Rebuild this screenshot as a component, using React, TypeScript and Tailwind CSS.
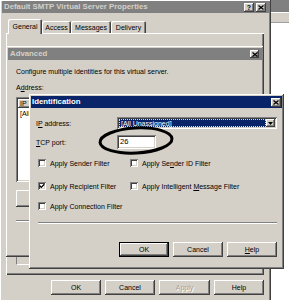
import React from "react";

const raised =
  "bg-[#d4d0c8] shadow-[inset_-1px_-1px_#404040,inset_1px_1px_#ffffff,inset_-2px_-2px_#808080,inset_2px_2px_#d4d0c8]";
const sunken =
  "bg-white shadow-[inset_1px_1px_#808080,inset_-1px_-1px_#ffffff,inset_2px_2px_#404040,inset_-2px_-2px_#d4d0c8]";

function CloseGlyph() {
  return (
    <svg width="6" height="5" viewBox="0 0 6 5">
      <path d="M0.5 0.5 L5.5 4.5 M5.5 0.5 L0.5 4.5" stroke="#000" strokeWidth="1.3" />
    </svg>
  );
}

function TitleBtn({ children, w = "w-[10px]", h = "h-[9px]" }: { children: React.ReactNode; w?: string; h?: string }) {
  return (
    <div className={`${raised} ${w} ${h} flex items-center justify-center shrink-0`}>{children}</div>
  );
}

function Btn({ label, w = "w-[50px]", disabled = false, def = false, u }: { label: string; w?: string; disabled?: boolean; def?: boolean; u?: boolean }) {
  const inner = (
    <div className={`${raised} h-full w-full flex items-center justify-center`}>
      <span
        className={`text-[7px] leading-none ${disabled ? "text-[#a0a0a0] [text-shadow:1px_1px_0_#ffffff]" : "text-black"}`}
      >
        {u ? (
          <>
            <span className="underline">{label[0]}</span>
            {label.slice(1)}
          </>
        ) : (
          label
        )}
      </span>
    </div>
  );
  if (def) {
    return <div className={`${w} h-[15px] border border-black`}>{inner}</div>;
  }
  return <div className={`${w} h-[15px]`}>{inner}</div>;
}

function Check({ checked = false }: { checked?: boolean }) {
  return (
    <div className={`${sunken} w-[8px] h-[8px] shrink-0 flex items-center justify-center`}>
      {checked && (
        <svg width="6" height="6" viewBox="0 0 6 6">
          <path d="M0.8 2.8 L2.3 4.4 L5.3 1.2" stroke="#000" strokeWidth="1.3" fill="none" />
        </svg>
      )}
    </div>
  );
}

function CheckRow({ label, checked }: { label: React.ReactNode; checked?: boolean }) {
  return (
    <div className="flex items-center gap-[4px] w-[92px]">
      <Check checked={checked} />
      <span className="text-[7px] leading-none whitespace-nowrap">{label}</span>
    </div>
  );
}

function Tab({ label, w, selected = false }: { label: string; w: string; selected?: boolean }) {
  return (
    <div
      className={`${w} ${selected ? "h-[15px] -mb-[1px] z-10" : "h-[12px]"} bg-[#d4d0c8] rounded-t-[2px] shadow-[inset_1px_1px_#ffffff,inset_-1px_0_#404040,inset_-2px_0_#808080] flex items-center justify-center relative`}
    >
      <span className="text-[7px] leading-none">{label}</span>
    </div>
  );
}

export default function App() {
  return (
    <div className="relative w-[289px] h-[300px] overflow-hidden bg-white font-['Liberation_Sans',Arial,sans-serif] text-black">
      {/* background window on the right */}
      <div className="absolute left-[266px] top-0 w-[23px] h-[300px] bg-white flex flex-col">
        <div className="h-[12px] bg-[#808080]" />
        <div className="h-[1px] bg-white" />
        <div className="h-[9px] bg-[#d4d0c8]" />
        <div className="h-[1px] bg-[#a0a0a0]" />
      </div>

      {/* main properties window */}
      <div className={`absolute left-0 top-0 w-[271px] h-[304px] ${raised} flex flex-col`}>
        <div className="mx-[2px] mt-[1px] h-[12px] bg-[#808080] flex items-center justify-between pl-[2px] pr-[3px]">
          <span className="text-[#d4d0c8] font-bold text-[7.8px] leading-none whitespace-nowrap">
            Default SMTP Virtual Server Properties
          </span>
          <div className="flex gap-[2px]">
            <TitleBtn>
              <span className="font-bold text-[7px] leading-none">?</span>
            </TitleBtn>
            <TitleBtn>
              <CloseGlyph />
            </TitleBtn>
          </div>
        </div>

        <div className="mt-[6px] h-[14px] pl-[8px] flex items-end">
          <Tab label="General" w="w-[34px]" selected />
          <Tab label="Access" w="w-[29px]" />
          <Tab label="Messages" w="w-[40px]" />
          <Tab label="Delivery" w="w-[35px]" />
        </div>

        <div className="mx-[6px] w-[258px] h-[242px] bg-[#d4d0c8] shadow-[inset_1px_1px_#ffffff,inset_-1px_-1px_#404040,inset_-2px_-2px_#808080] flex flex-col">
          <div className="mt-[224px] ml-[10px] w-[80px] h-[8px] border-l border-b border-l-[#808080] border-b-white" />
        </div>

        <div className="mt-[5px] flex justify-end gap-[4px] pr-[7px]">
          <Btn label="OK" />
          <Btn label="Cancel" />
          <Btn label="Apply" w="w-[51px]" disabled />
          <Btn label="Help" />
        </div>
      </div>

      {/* Advanced dialog */}
      <div className={`absolute left-[6px] top-[46px] w-[258px] h-[211px] ${raised} flex flex-col`}>
        <div className="mx-[2px] mt-[2px] h-[12px] bg-[#808080] flex items-center justify-between pl-[2px] pr-[3px]">
          <span className="text-[#d4d0c8] font-bold text-[7.8px] leading-none">Advanced</span>
          <TitleBtn w="w-[9px]" h="h-[8px]">
            <CloseGlyph />
          </TitleBtn>
        </div>
        <div className="pl-[10px] flex flex-col">
          <span className="mt-[8px] text-[7px] leading-[8px] whitespace-nowrap">
            Configure multiple identities for this virtual server.
          </span>
          <span className="mt-[8px] text-[7px] leading-[8px]">
            A<span className="underline">d</span>dress:
          </span>
          <div className={`mt-[5px] w-[200px] h-[85px] ${sunken} p-[2px] flex flex-col`}>
            <div className={`${raised} h-[9px] w-[60px] flex items-center pl-[2px]`}>
              <span className="text-[7px] leading-none">IP</span>
            </div>
            <span className="mt-[2px] pl-[2px] text-[7px] leading-none">[All Unassigned]</span>
          </div>
          <div className={`mt-[8px] w-[60px] h-[17px] ${raised}`} />
          <div className="mt-[13px] w-[100px] h-[2px] border-t border-b border-t-[#808080] border-b-white" />
        </div>
      </div>

      {/* Identification dialog */}
      <div className={`absolute left-[29px] top-[94px] w-[255px] h-[175px] ${raised} flex flex-col`}>
        <div className="mx-[2px] mt-[2px] h-[12px] bg-[#0a246a] flex items-center justify-between pl-[1px] pr-[1px]">
          <span className="text-white font-bold text-[7.8px] leading-none">Identification</span>
          <TitleBtn>
            <CloseGlyph />
          </TitleBtn>
        </div>

        <div className="pl-[7px] flex flex-col">
          <div className="mt-[9px] h-[12px] flex items-center">
            <span className="w-[81px] text-[7px] leading-none">
              I<span className="underline">P</span> address:
            </span>
            <div className={`w-[160px] h-[12px] ${sunken} p-[2px] flex items-stretch`}>
              <div className="flex-1 bg-[#0a246a] border border-dotted border-[#e8e0a0] flex items-center pl-[1px]">
                <span className="text-white text-[7px] leading-none">[All Unassigned]</span>
              </div>
              <div className={`${raised} w-[9px] flex items-center justify-center`}>
                <svg width="5" height="3" viewBox="0 0 5 3">
                  <path d="M0 0 L5 0 L2.5 3 Z" fill="#000" />
                </svg>
              </div>
            </div>
          </div>

          <div className="mt-[6px] h-[14px] flex items-center">
            <span className="w-[81px] text-[7px] leading-none">
              <span className="underline">T</span>CP port:
            </span>
            <div className={`w-[39px] h-[14px] ${sunken} flex items-center pl-[3px]`}>
              <span className="text-[7.5px] leading-none">26</span>
            </div>
          </div>

          <div className="mt-[9px] h-[10px] pl-[2px] flex items-center">
            <CheckRow label="Apply Sender Filter" />
            <CheckRow
              label={
                <>
                  Apply Se<span className="underline">n</span>der ID Filter
                </>
              }
            />
          </div>
          <div className="mt-[13px] h-[10px] pl-[2px] flex items-center">
            <CheckRow label="Apply Recipient Filter" checked />
            <CheckRow
              label={
                <>
                  Apply Intelligent <span className="underline">M</span>essage Filter
                </>
              }
            />
          </div>
          <div className="mt-[10px] h-[10px] pl-[2px] flex items-center">
            <CheckRow label="Apply Connection Filter" />
          </div>

          <div className="mt-[11px] ml-[2px] w-[239px] h-[2px] border-t border-b border-t-[#808080] border-b-white" />

          <div className="mt-[18px] pr-[7px] flex justify-end gap-[4px]">
            <Btn label="OK" def />
            <Btn label="Cancel" />
            <Btn label="Help" u />
          </div>
        </div>
      </div>

      {/* hand-drawn ellipse annotation */}
      <svg className="absolute left-[96px] top-[124px]" width="82" height="34" viewBox="0 0 82 34">
        <ellipse cx="40" cy="16.5" rx="36" ry="12.5" fill="none" stroke="#000" strokeWidth="3" transform="rotate(-3 40 16.5)" />
      </svg>
    </div>
  );
}
